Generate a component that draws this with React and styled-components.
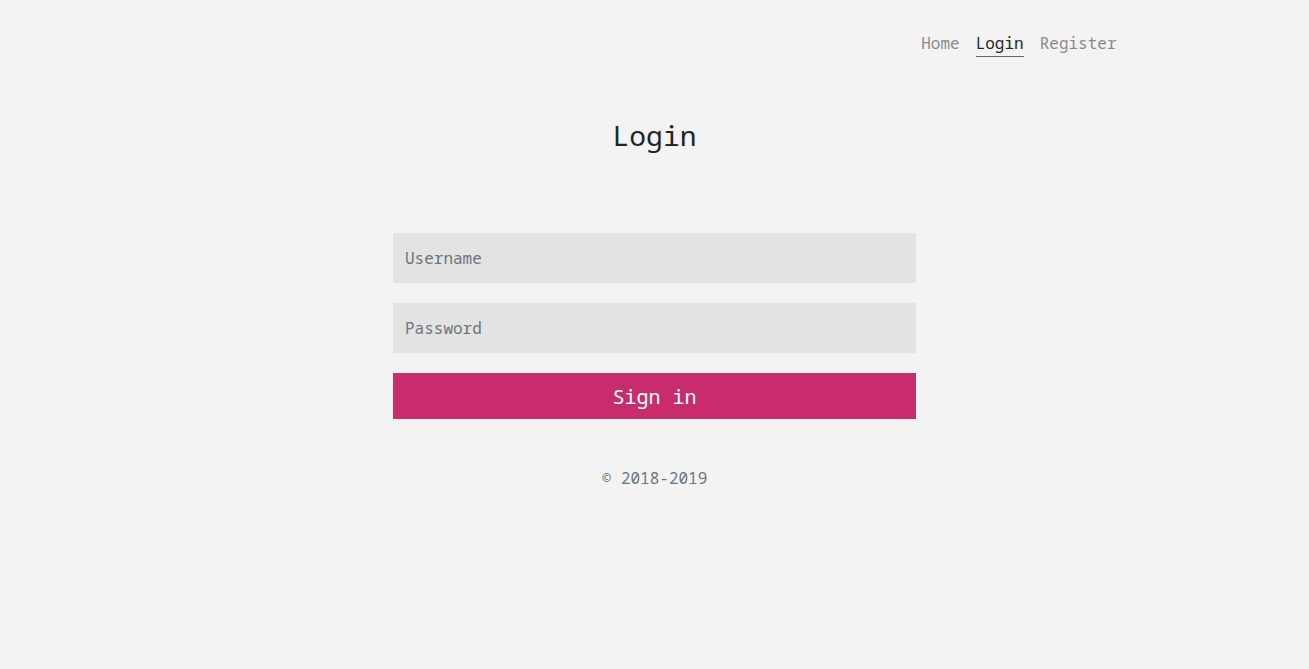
import React from "react";
import styled, { createGlobalStyle } from "styled-components";

const GlobalStyle = createGlobalStyle`
  body {
    margin: 0;
    background: #f3f3f3;
    font-family: "Noto Sans Mono", "Droid Sans Mono", "DejaVu Sans Mono", monospace;
    color: #212529;
  }
`;

const Page = styled.div`
  min-height: 669px;
  display: flex;
  flex-direction: column;
  align-items: center;
`;

const Header = styled.header`
  width: 1000px;
  display: flex;
  justify-content: flex-end;
  padding: 31px 38px 0 0;
  box-sizing: border-box;
`;

const Nav = styled.nav`
  display: flex;
  gap: 16px;
`;

const NavLink = styled.a`
  font-size: 16px;
  line-height: 24px;
  padding-bottom: 1px;
  text-decoration: none;
  color: ${(p) => (p.$active ? "#212529" : "#8a8a8a")};
  border-bottom: 1px solid ${(p) => (p.$active ? "#666" : "transparent")};
  cursor: pointer;
`;

const Title = styled.h1`
  margin: 60px 0 0;
  font-size: 28px;
  font-weight: 400;
  line-height: 36px;
  color: #212529;
`;

const Form = styled.form`
  margin-top: 80px;
  width: 523px;
  display: flex;
  flex-direction: column;
  gap: 20px;
`;

const Input = styled.input`
  height: 50px;
  border: none;
  outline: none;
  background: #e3e3e3;
  padding: 0 12px;
  font-family: inherit;
  font-size: 16px;
  color: #495057;
  &::placeholder {
    color: #6c757d;
  }
`;

const Button = styled.button`
  height: 46px;
  border: none;
  background: #c82c6d;
  color: #fff;
  font-family: inherit;
  font-size: 20px;
  cursor: pointer;
`;

const Footer = styled.p`
  margin: 48px 0 0;
  font-size: 16px;
  color: #6c757d;
`;

export default function App() {
  return (
    <>
      <GlobalStyle />
      <Page>
        <Header>
          <Nav>
            <NavLink>Home</NavLink>
            <NavLink $active>Login</NavLink>
            <NavLink>Register</NavLink>
          </Nav>
        </Header>
        <Title>Login</Title>
        <Form onSubmit={(e) => e.preventDefault()}>
          <Input placeholder="Username" />
          <Input type="password" placeholder="Password" />
          <Button type="submit">Sign in</Button>
        </Form>
        <Footer>© 2018-2019</Footer>
      </Page>
    </>
  );
}
